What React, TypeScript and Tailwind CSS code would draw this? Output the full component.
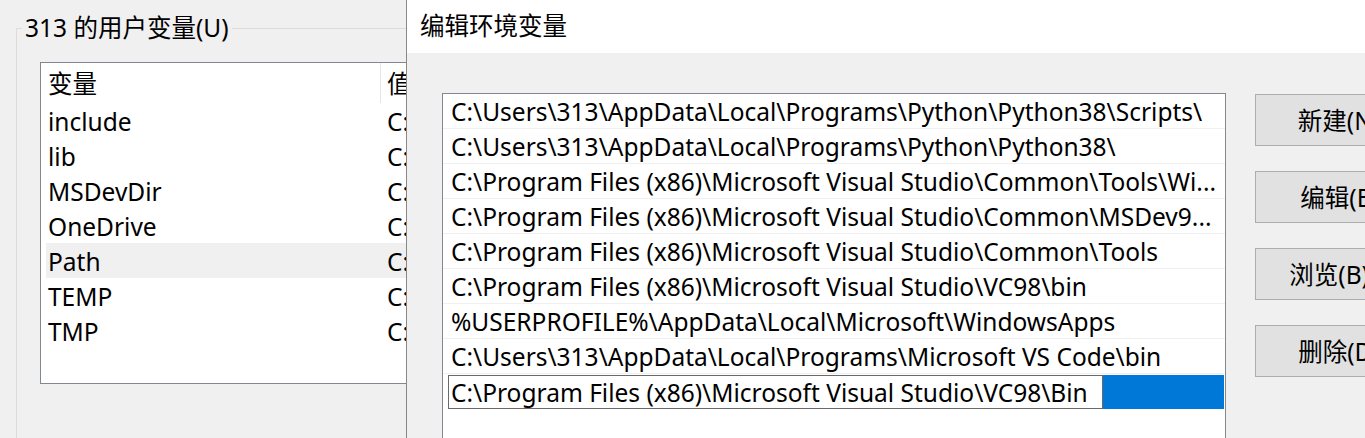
const userVars = [
  { name: "include", value: "C:\\Program Files (x86)\\Microsoft Visual Studio\\VC98\\atl\\include" },
  { name: "lib", value: "C:\\Program Files (x86)\\Microsoft Visual Studio\\VC98\\mfc\\lib" },
  { name: "MSDevDir", value: "C:\\Program Files (x86)\\Microsoft Visual Studio\\Common\\MSDev98" },
  { name: "OneDrive", value: "C:\\Users\\313\\OneDrive" },
  { name: "Path", value: "C:\\Users\\313\\AppData\\Local\\Programs\\Python\\Python38\\Scripts\\" },
  { name: "TEMP", value: "C:\\Users\\313\\AppData\\Local\\Temp" },
  { name: "TMP", value: "C:\\Users\\313\\AppData\\Local\\Temp" },
];

const pathEntries = [
  "C:\\Users\\313\\AppData\\Local\\Programs\\Python\\Python38\\Scripts\\",
  "C:\\Users\\313\\AppData\\Local\\Programs\\Python\\Python38\\",
  "C:\\Program Files (x86)\\Microsoft Visual Studio\\Common\\Tools\\Wi...",
  "C:\\Program Files (x86)\\Microsoft Visual Studio\\Common\\MSDev9...",
  "C:\\Program Files (x86)\\Microsoft Visual Studio\\Common\\Tools",
  "C:\\Program Files (x86)\\Microsoft Visual Studio\\VC98\\bin",
  "%USERPROFILE%\\AppData\\Local\\Microsoft\\WindowsApps",
  "C:\\Users\\313\\AppData\\Local\\Programs\\Microsoft VS Code\\bin",
];

const editing = "C:\\Program Files (x86)\\Microsoft Visual Studio\\VC98\\Bin";

const buttons = ["新建(N)", "编辑(E)", "浏览(B)...", "删除(D)"];

// left window, mostly hidden behind the edit dialog
const UserVariables = () => {
  return (
    <div className="w-[406px] shrink-0 overflow-hidden pl-4 pt-[12px]">
      <fieldset className="h-[500px] border-l border-t border-[#dcdcdc]">
        <legend className="ml-[5px] px-[3px] leading-[32px]">313 的用户变量(U)</legend>
        <div className="ml-[23px] mt-[18px] h-[322px] w-[366px] overflow-hidden border border-r-0 border-[#828790] bg-white">
          <div className="flex h-[40px] items-stretch">
            <div className="ml-[6px] flex w-[333px] shrink-0 items-center pl-px pt-[3px]">变量</div>
            <div className="w-px shrink-0 bg-[#e5e5e5]" />
            <div className="flex min-w-0 flex-1 items-center overflow-hidden pl-[6px] pt-[3px]">值</div>
          </div>
          {userVars.map((v) => (
            <div
              key={v.name}
              className={`ml-[5px] flex h-[35px] items-center pl-[2px] pt-[3px] ${v.name === "Path" ? "bg-[#f0f0f0]" : ""}`}
            >
              <div className="w-[339px] shrink-0">{v.name}</div>
              <div className="min-w-0 flex-1 overflow-hidden whitespace-nowrap">{v.value}</div>
            </div>
          ))}
        </div>
      </fieldset>
    </div>
  );
};

const EditDialog = () => {
  return (
    <div className="flex min-w-0 flex-1 flex-col border-l border-[#888888]">
      <div className="flex h-[53px] shrink-0 items-center bg-white pl-[13px]">编辑环境变量</div>
      <div className="flex flex-1 bg-[#f0f0f0] pl-[35px] pt-[40px]">
        <div className="h-[380px] w-[784px] shrink-0 border border-[#828790] bg-white">
          {pathEntries.map((p) => (
            <div
              key={p}
              className="flex h-[35px] items-center overflow-hidden whitespace-nowrap border-b border-[#f0f0f0] px-[8px] pt-[3px]"
            >
              {p}
            </div>
          ))}
          <div className="flex h-[35px] pl-[5px] pr-px pt-px">
            <div className="flex w-[655px] items-center whitespace-nowrap border border-[#6a6a6a] bg-white px-[2px] pt-[2px]">
              {editing}
            </div>
            <div className="flex-1 bg-[#0078d7]" />
          </div>
        </div>
        <div className="ml-[29px] flex shrink-0 flex-col gap-[25px] pt-px">
          {buttons.map((b) => (
            <button
              key={b}
              className="flex h-[52px] w-[168px] items-center justify-center border border-[#adadad] bg-[#e1e1e1] pt-[2px]"
            >
              {b}
            </button>
          ))}
        </div>
      </div>
    </div>
  );
};

export default function App() {
  return (
    <div className="flex h-[438px] w-[1365px] overflow-hidden bg-[#f0f0f0] font-['Noto_Sans','Noto_Sans_CJK_SC',sans-serif] text-[24.5px] leading-none text-black">
      <UserVariables />
      <EditDialog />
    </div>
  );
}
